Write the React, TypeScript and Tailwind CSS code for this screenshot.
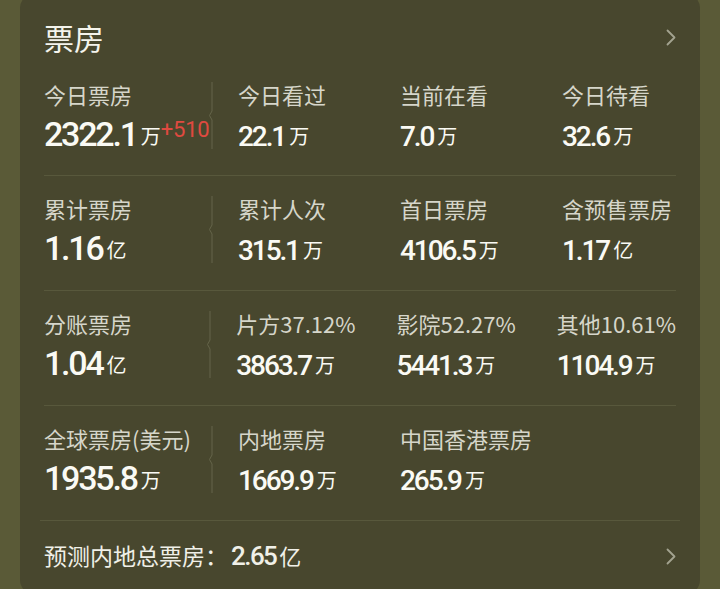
import React from "react";

type Cell = { label: string; value: string; unit: string; delta?: string };

const rows: Cell[][] = [
  [
    { label: "今日票房", value: "2322.1", unit: "万", delta: "+510" },
    { label: "今日看过", value: "22.1", unit: "万" },
    { label: "当前在看", value: "7.0", unit: "万" },
    { label: "今日待看", value: "32.6", unit: "万" },
  ],
  [
    { label: "累计票房", value: "1.16", unit: "亿" },
    { label: "累计人次", value: "315.1", unit: "万" },
    { label: "首日票房", value: "4106.5", unit: "万" },
    { label: "含预售票房", value: "1.17", unit: "亿" },
  ],
  [
    { label: "分账票房", value: "1.04", unit: "亿" },
    { label: "片方37.12%", value: "3863.7", unit: "万" },
    { label: "影院52.27%", value: "5441.3", unit: "万" },
    { label: "其他10.61%", value: "1104.9", unit: "万" },
  ],
  [
    { label: "全球票房(美元)", value: "1935.8", unit: "万" },
    { label: "内地票房", value: "1669.9", unit: "万" },
    { label: "中国香港票房", value: "265.9", unit: "万" },
  ],
];

const cjk = "font-['Noto_Sans_CJK_SC','Noto_Sans',sans-serif]";
const num = "font-['Roboto','Noto_Sans_CJK_SC',sans-serif]";

function Chevron() {
  return (
    <svg width="10" height="17" viewBox="0 0 10 17" fill="none">
      <polyline points="1.5,1.5 8.5,8.5 1.5,15.5" stroke="#a3a390" strokeWidth="1.8" strokeLinecap="round" strokeLinejoin="round" />
    </svg>
  );
}

function Divider() {
  return (
    <svg width="8" height="67" viewBox="0 0 8 67" fill="none" className="-mt-px shrink-0">
      <path d="M4 0 V29 L1.5 33.5 L4 38 V67" stroke="#65654a" strokeWidth="1" />
    </svg>
  );
}

function Stat({ cell, big }: { cell: Cell; big?: boolean }) {
  return (
    <div className="flex flex-col">
      <div className={`${cjk} text-[22px] leading-none whitespace-nowrap text-[#d6d6ca]`}>{cell.label}</div>
      <div className={`${num} mt-[11px] h-[36px] whitespace-nowrap text-[34px] leading-[36px] text-[#fafaf4]`}>
        <span className={big ? "text-[34px] leading-none font-medium tracking-[-0.065em]" : "text-[28px] leading-none font-medium tracking-[-0.075em]"}>{cell.value}</span>
        <span className={`${cjk} ml-[4px] align-[2px] text-[20px] leading-none`}>{cell.unit}</span>
        {cell.delta && <span className="align-[9px] text-[22px] leading-none tracking-[-0.01em] text-[#e04a40]">{cell.delta}</span>}
      </div>
    </div>
  );
}

export default function App() {
  return (
    <div className="min-h-screen bg-[#5a5a37] px-5">
      <div className="-mt-[6px] min-h-[600px] rounded-[14px] bg-[#48472e] px-6 pt-[28px]">
        <div className="mb-[7px] flex items-center justify-between">
          <h1 className={`${cjk} text-[30px] leading-[30px] text-[#f4f4ec]`}>票房</h1>
          <Chevron />
        </div>
        {rows.map((row, i) => (
          <div key={i} className={i === 0 ? "flex pt-[24px] pb-[23px]" : "flex border-t border-[#58583c] pt-[21px] pb-[24px]"}>
            <div className="w-[164px]">
              <Stat cell={row[0]} big />
            </div>
            <Divider />
            <div className="w-[184px] pl-[22px]">{row[1] && <Stat cell={row[1]} />}</div>
            <div className="w-[162px]">{row[2] && <Stat cell={row[2]} />}</div>
            <div className="flex-1">{row[3] && <Stat cell={row[3]} />}</div>
          </div>
        ))}
        <div className="-mx-1 flex items-center justify-between border-t border-[#58583c] px-1 pt-[22px]">
          <div className="flex items-baseline text-[#f0f0e8]">
            <span className={`${cjk} text-[23px] leading-none`}>预测内地总票房：</span>
            <span className={`${num} ml-[3px] text-[26px] leading-none font-medium tracking-[-0.06em]`}>2.65</span>
            <span className={`${cjk} ml-[3px] text-[22px] leading-none`}>亿</span>
          </div>
          <Chevron />
        </div>
      </div>
    </div>
  );
}
